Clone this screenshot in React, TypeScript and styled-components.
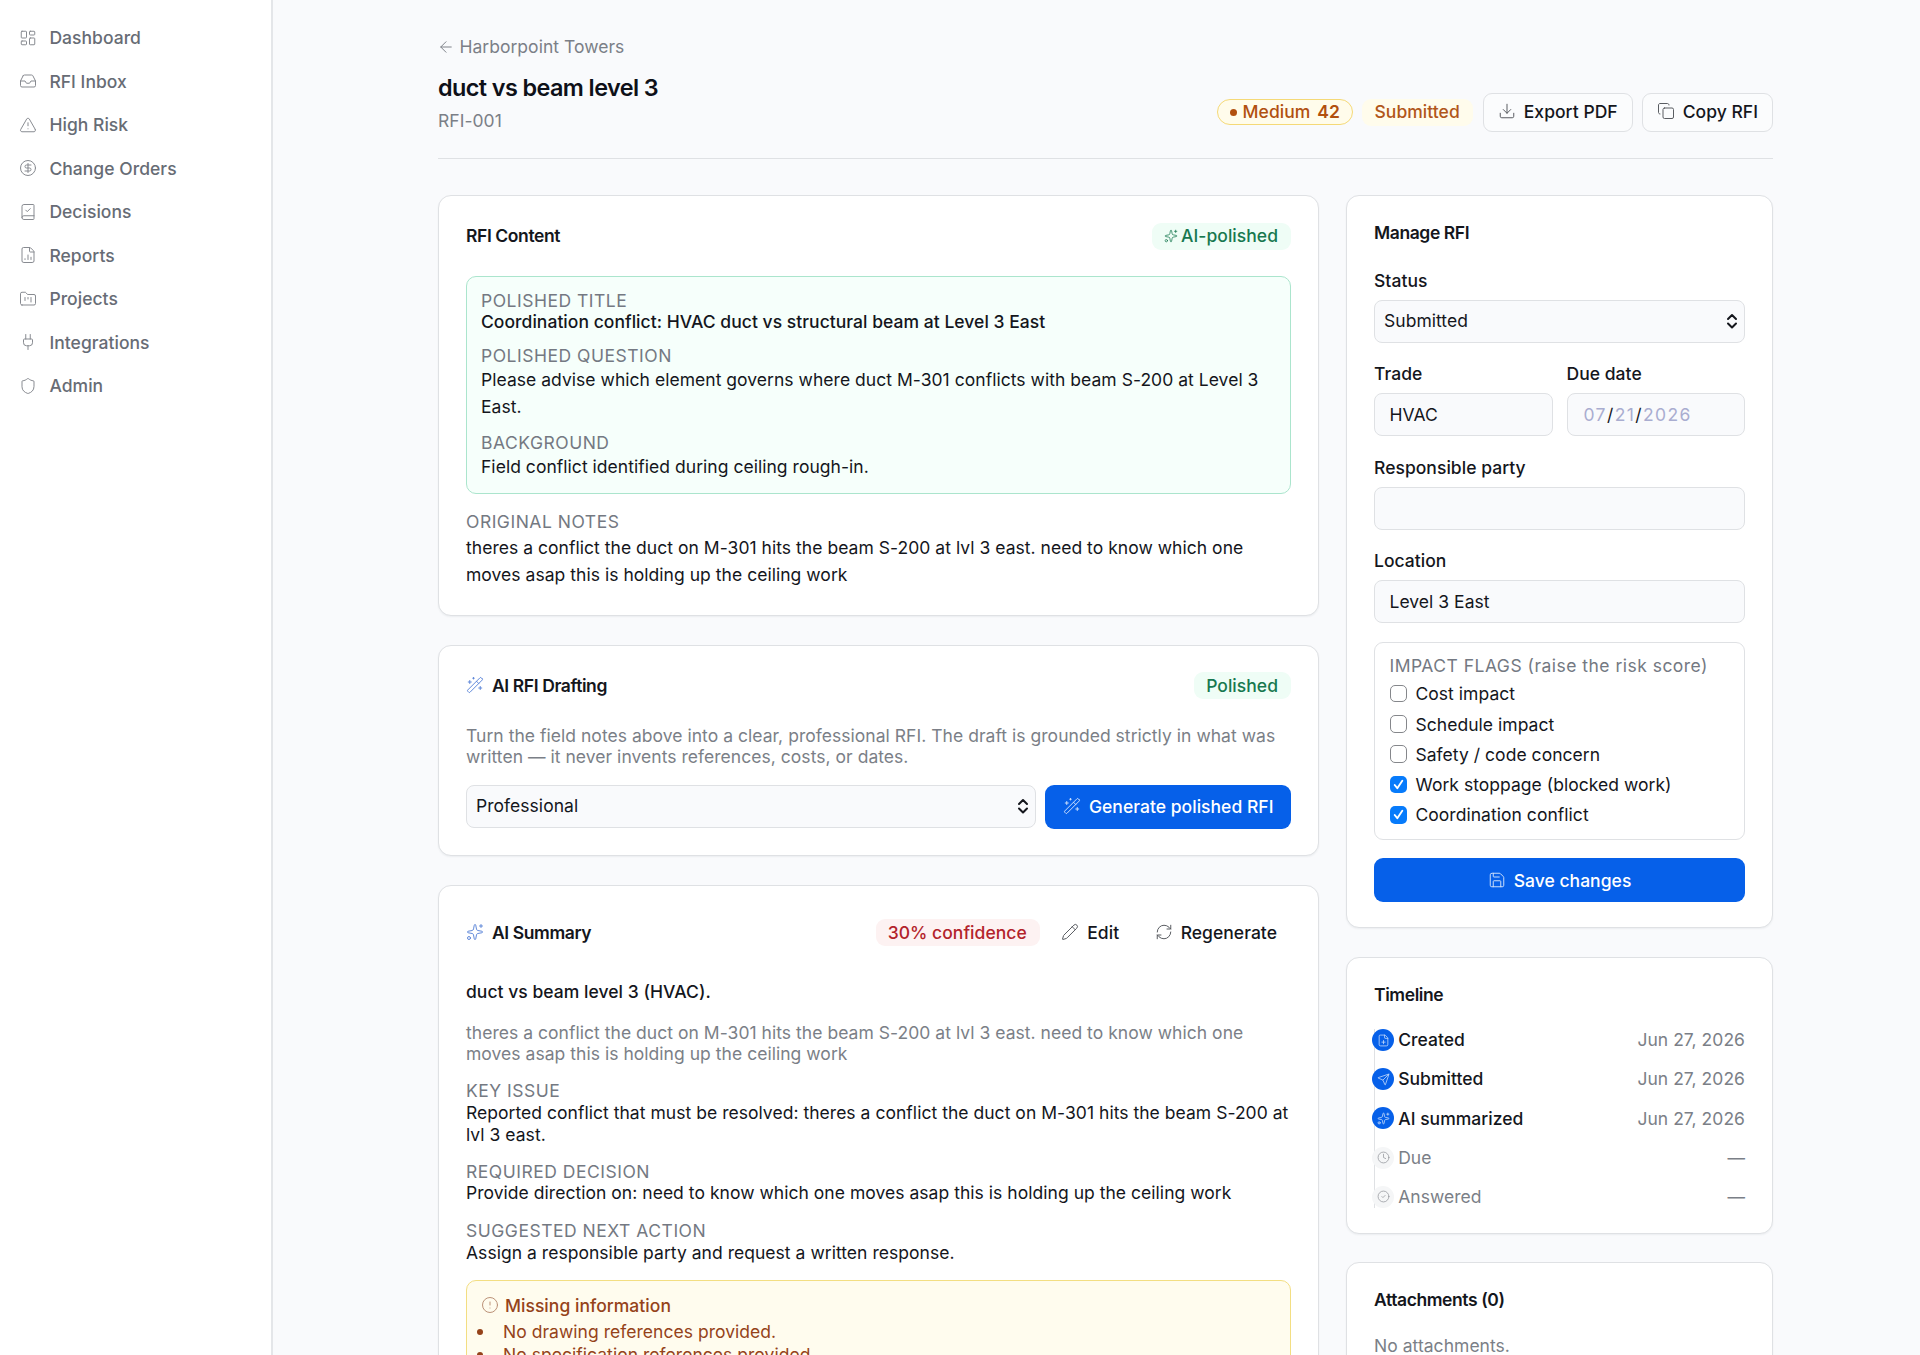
import React from 'react';
import styled, { createGlobalStyle, css } from 'styled-components';
import {
  LayoutDashboard, Inbox, TriangleAlert, CircleDollarSign, BookCheck, FileChartColumn,
  FolderKanban, Plug, Shield, ArrowLeft, Download, Copy, Sparkles, WandSparkles, Pencil,
  RefreshCw, CircleAlert, Save, FilePlus, Send, Clock, CircleCheck, type LucideIcon,
} from 'lucide-react';

const ink = '#14161c';
const muted = '#7b7f87';
const line = '#dfe1e4';
const blue = '#0660e9';

const Global = createGlobalStyle`
  * { box-sizing: border-box; }
  html, body { margin: 0; padding: 0; }
  body {
    background: #f9fafc;
    color: ${ink};
    font-family: Inter, "Liberation Sans", sans-serif;
    font-size: 17.5px;
    line-height: 21.7px;
    letter-spacing: 0.035px;
  }
  h1, h2, p, ul { margin: 0; padding: 0; }
  svg { display: block; flex: none; }
`;

const Page = styled.div`
  display: flex;
  height: 1355px;
  overflow: hidden;
`;

const Sidebar = styled.nav`
  flex: none;
  width: 273px;
  padding: 27px 19px;
  background: #fff;
  border-right: 2px solid #e4e6e9;
`;

const NavItem = styled.a`
  display: flex;
  align-items: center;
  gap: 12.4px;
  height: 22px;
  margin-bottom: 21.5px;
  color: #676c75;
  font-weight: 500;
  svg { color: #85888e; position: relative; top: -0.5px; }
`;

const Main = styled.main`
  flex: 1;
  padding: 35px 147px 0 165px;
`;

const Header = styled.header`
  display: flex;
  justify-content: space-between;
  height: 123.5px;
  border-bottom: 1px solid ${line};
`;

const Back = styled.a`
  display: flex;
  align-items: center;
  gap: 4.4px;
  height: 23px;
  color: ${muted};
  svg { margin-left: -1px; }
`;

const Title = styled.h1`
  margin-top: 14px;
  font-size: 23.4px;
  line-height: 32px;
  font-weight: 600;
  letter-spacing: -0.585px;
  color: #0e1018;
`;

const Ref = styled.p`
  margin-top: 6.3px;
  color: ${muted};
`;

const Actions = styled.div`
  display: flex;
  align-items: center;
  align-self: flex-start;
  gap: 9px;
  margin-top: 57.5px;
`;

const RiskPill = styled.span`
  display: flex;
  align-items: center;
  height: 26px;
  padding: 0 12.5px 0 12px;
  border: 1.5px solid #f5d977;
  border-radius: 13px;
  background: #fffceb;
  color: #b1500f;
  font-weight: 500;
  b { margin-left: 7px; font-weight: 600; }
`;

const Dot = styled.i`
  width: 7px;
  height: 7px;
  margin-right: 6px;
  border-radius: 50%;
  background: #b1500f;
`;

const tones = {
  green: css`background: #effdf6; color: #17784f;`,
  amber: css`background: #fffcec; color: #b1561a; margin-right: 1px;`,
  red: css`background: #fdf2f2; color: #b3232b;`,
};

const Pill = styled.span<{ $tone: keyof typeof tones }>`
  display: inline-flex;
  align-items: center;
  gap: 3px;
  height: 27px;
  padding: 0 13px 0 12px;
  border-radius: 9px;
  font-weight: 500;
  ${p => tones[p.$tone]}
`;

const OutlineButton = styled.button`
  display: flex;
  align-items: center;
  gap: 8px;
  height: 39px;
  padding: 0 14px;
  border: 1px solid ${line};
  border-radius: 9px;
  background: #fbfcfd;
  color: ${ink};
  font: inherit;
  font-weight: 500;
  letter-spacing: inherit;
  svg { color: #55585e; position: relative; top: -1px; }
`;

const GhostButton = styled(OutlineButton)`
  padding: 0 13px;
  border-color: transparent;
  background: none;
`;

const PrimaryButton = styled(OutlineButton)`
  justify-content: center;
  height: 44px;
  padding: 1px 17.5px 0;
  border: 0;
  background: ${blue};
  color: #fff;
  svg { color: #cfe0fb; }
`;

const Columns = styled.div`
  display: grid;
  grid-template-columns: 881px 427px;
  justify-content: space-between;
  align-items: start;
  margin-top: 36.5px;
`;

const Column = styled.div`
  display: flex;
  flex-direction: column;
  gap: 28.5px;
`;

const Card = styled.section<{ $top?: number; $bottom?: number }>`
  padding: ${p => p.$top ?? 25.7}px 27px ${p => p.$bottom ?? 25.4}px;
  border: 1px solid ${line};
  border-radius: 13px;
  background: #fff;
  box-shadow: 0 1px 2px rgba(20, 30, 50, 0.06);
`;

const CardHead = styled.div<{ $h?: number }>`
  display: flex;
  align-items: center;
  justify-content: space-between;
  height: ${p => p.$h ?? 27}px;
`;

const CardTitle = styled.h2`
  display: flex;
  align-items: center;
  gap: 8px;
  font-size: 17.5px;
  line-height: 22px;
  font-weight: 600;
  letter-spacing: -0.4px;
  svg { color: #5d86d8; position: relative; top: -1px; }
`;

const Group = styled.div`
  display: flex;
  align-items: center;
  gap: 7.5px;
`;

const Overline = styled.p`
  line-height: 21px;
  letter-spacing: 0.51px;
  color: #747982;
`;

const Text = styled.p<{ $mt?: number; $lh?: number; $medium?: boolean; $muted?: boolean }>`
  margin-top: ${p => p.$mt ?? 0}px;
  line-height: ${p => p.$lh ?? 21.7}px;
  font-weight: ${p => (p.$medium ? 500 : 400)};
  color: ${p => (p.$muted ? muted : 'inherit')};
`;

const Polished = styled.div`
  display: flex;
  flex-direction: column;
  gap: 11.8px;
  margin: 26.5px 0 17px;
  padding: 12.4px 14px 13.4px;
  border: 1.5px solid #abe5cd;
  border-radius: 10px;
  background: #f6fffb;
`;

const DraftRow = styled.div`
  display: flex;
  gap: 9px;
  margin-top: 16.6px;
`;

const Box = styled.div<{ $select?: boolean }>`
  display: flex;
  flex: 1;
  align-items: center;
  justify-content: space-between;
  height: 43px;
  padding: ${p => (p.$select ? '0 6px 0.6px 9px' : '0.6px 14.5px 0')};
  border: 1px solid ${line};
  border-radius: 8px;
  background: #f9fafc;
`;

const Facts = styled.div`
  display: flex;
  flex-direction: column;
  gap: 15.5px;
  margin-top: 15.4px;
`;

const Warning = styled.div`
  margin-top: 16.4px;
  padding: 14px 14px;
  border: 1.5px solid #f3de82;
  border-radius: 10px;
  background: #fffcee;
  color: #95431a;
`;

const WarningTitle = styled.p`
  display: flex;
  align-items: center;
  gap: 6px;
  font-weight: 500;
  svg { color: #b98f74; }
`;

const Bullets = styled.ul`
  margin-top: 3.8px;
  list-style: none;
`;

const Bullet = styled.li`
  display: flex;
  align-items: center;
  gap: 20px;
  height: 23px;
  margin-left: -4px;
  &::before {
    content: '';
    width: 6px;
    height: 6px;
    border-radius: 50%;
    background: #95431a;
  }
`;

const Form = styled.div`
  display: grid;
  grid-template-columns: 1fr 1fr;
  gap: 20.2px 14px;
  margin-top: 26.2px;
`;

const Field = styled.label<{ $wide?: boolean }>`
  display: flex;
  flex-direction: column;
  grid-column: ${p => (p.$wide ? '1 / -1' : 'auto')};
  gap: 8.2px;
  line-height: 22px;
  font-weight: 500;
  ${Box} { flex: none; font-weight: 400; }
`;

const DateValue = styled.span`
  padding-left: 1.5px;
  letter-spacing: 1.4px;
  color: #a9add0;
  i { font-style: normal; color: ${ink}; }
`;

const Flags = styled.div`
  display: flex;
  flex-direction: column;
  gap: 8.3px;
  margin: 18.4px 0;
  padding: 12.8px 14.5px 12.4px;
  border: 1px solid ${line};
  border-radius: 9px;
  ${Overline} { margin-bottom: -1.6px; letter-spacing: 0.48px; }
`;

const Flag = styled.label`
  display: flex;
  align-items: center;
  gap: 8.5px;
  height: 22px;
`;

const Check = styled.span<{ $on: boolean }>`
  display: grid;
  place-items: center;
  width: 17.5px;
  height: 17.5px;
  margin-top: -1px;
  border: ${p => (p.$on ? '0' : '1px solid #85878b')};
  border-radius: 5px;
  background: ${p => (p.$on ? '#077bfb' : '#fff')};
`;

const Steps = styled.div`
  display: flex;
  flex-direction: column;
  gap: 17.1px;
  margin-top: 23.6px;
  border-left: 1px solid ${line};
`;

const Step = styled.div<{ $done: boolean }>`
  display: flex;
  align-items: center;
  height: 22px;
  margin-left: -3px;
  color: ${p => (p.$done ? ink : muted)};
  font-weight: ${p => (p.$done ? 500 : 400)};
`;

const StepIcon = styled.span<{ $done: boolean }>`
  display: grid;
  place-items: center;
  width: 22px;
  height: 22px;
  margin-right: 4.2px;
  border-radius: 50%;
  background: ${p => (p.$done ? blue : '#f5f6f7')};
  color: ${p => (p.$done ? '#cfe0fb' : '#94979c')};
`;

const StepDate = styled.span`
  margin-left: auto;
  color: ${muted};
  font-weight: 400;
`;

const nav: [string, LucideIcon][] = [
  ['Dashboard', LayoutDashboard],
  ['RFI Inbox', Inbox],
  ['High Risk', TriangleAlert],
  ['Change Orders', CircleDollarSign],
  ['Decisions', BookCheck],
  ['Reports', FileChartColumn],
  ['Projects', FolderKanban],
  ['Integrations', Plug],
  ['Admin', Shield],
];

const flags: [string, boolean][] = [
  ['Cost impact', false],
  ['Schedule impact', false],
  ['Safety / code concern', false],
  ['Work stoppage (blocked work)', true],
  ['Coordination conflict', true],
];

const steps: [string, LucideIcon, string][] = [
  ['Created', FilePlus, 'Jun 27, 2026'],
  ['Submitted', Send, 'Jun 27, 2026'],
  ['AI summarized', Sparkles, 'Jun 27, 2026'],
  ['Due', Clock, ''],
  ['Answered', CircleCheck, ''],
];

const notes =
  'theres a conflict the duct on M-301 hits the beam S-200 at lvl 3 east. need to know which one moves asap this is holding up the ceiling work';

const Chevrons = () => (
  <svg width="12" height="16" viewBox="0 0 12 16" fill="none" stroke={ink} strokeWidth="2" strokeLinecap="round" strokeLinejoin="round">
    <path d="M2 6l4-4 4 4M2 10.5l4 4 4-4" />
  </svg>
);

const Tick = () => (
  <svg width="17" height="17" viewBox="0 0 17 17" fill="none" stroke="#fff" strokeWidth="1.9" strokeLinecap="round" strokeLinejoin="round">
    <path d="M4.7 9l2.6 3.2 5-7.4" />
  </svg>
);

const thin = { size: 18, strokeWidth: 1.3 };

export default function App() {
  return (
    <Page>
      <Global />
      <Sidebar>
        {nav.map(([label, Icon]) => (
          <NavItem key={label}><Icon {...thin} />{label}</NavItem>
        ))}
      </Sidebar>
      <Main>
        <Header>
          <div>
            <Back><ArrowLeft {...thin} />Harborpoint Towers</Back>
            <Title>duct vs beam level 3</Title>
            <Ref>RFI-001</Ref>
          </div>
          <Actions>
            <RiskPill><Dot />Medium <b>42</b></RiskPill>
            <Pill $tone="amber">Submitted</Pill>
            <OutlineButton><Download {...thin} />Export PDF</OutlineButton>
            <OutlineButton><Copy {...thin} />Copy RFI</OutlineButton>
          </Actions>
        </Header>
        <Columns>
          <Column>
            <Card $top={26.8} $bottom={26.6}>
              <CardHead>
                <CardTitle>RFI Content</CardTitle>
                <Pill $tone="green"><Sparkles size={14} strokeWidth={1.3} />AI-polished</Pill>
              </CardHead>
              <Polished>
                <div>
                  <Overline>POLISHED TITLE</Overline>
                  <Text $medium $lh={22} $mt={0.3}>Coordination conflict: HVAC duct vs structural beam at Level 3 East</Text>
                </div>
                <div>
                  <Overline>POLISHED QUESTION</Overline>
                  <Text $lh={27}>Please advise which element governs where duct M-301 conflicts with beam S-200 at Level 3 East.</Text>
                </div>
                <div>
                  <Overline>BACKGROUND</Overline>
                  <Text $lh={27}>Field conflict identified during ceiling rough-in.</Text>
                </div>
              </Polished>
              <Overline>ORIGINAL NOTES</Overline>
              <Text $lh={27.2} $mt={2.2}>{notes}</Text>
            </Card>
            <Card $top={26.6} $bottom={26.6}>
              <CardHead>
                <CardTitle><WandSparkles {...thin} />AI RFI Drafting</CardTitle>
                <Pill $tone="green">Polished</Pill>
              </CardHead>
              <Text $muted $mt={25.4}>
                Turn the field notes above into a clear, professional RFI. The draft is grounded strictly in what was written — it never invents references, costs, or dates.
              </Text>
              <DraftRow>
                <Box $select>Professional<Chevrons /></Box>
                <PrimaryButton><WandSparkles {...thin} />Generate polished RFI</PrimaryButton>
              </DraftRow>
            </Card>
            <Card $top={27.6}>
              <CardHead $h={39}>
                <CardTitle><Sparkles {...thin} />AI Summary</CardTitle>
                <Group>
                  <Pill $tone="red">30% confidence</Pill>
                  <GhostButton><Pencil {...thin} />Edit</GhostButton>
                  <GhostButton><RefreshCw {...thin} />Regenerate</GhostButton>
                </Group>
              </CardHead>
              <Text $medium $mt={28.3}>duct vs beam level 3 (HVAC).</Text>
              <Text $muted $mt={19.3}>{notes}</Text>
              <Facts>
                <div>
                  <Overline>KEY ISSUE</Overline>
                  <Text $mt={0.5}>Reported conflict that must be resolved: theres a conflict the duct on M-301 hits the beam S-200 at lvl 3 east.</Text>
                </div>
                <div>
                  <Overline>REQUIRED DECISION</Overline>
                  <Text $mt={0.5}>Provide direction on: need to know which one moves asap this is holding up the ceiling work</Text>
                </div>
                <div>
                  <Overline>SUGGESTED NEXT ACTION</Overline>
                  <Text $mt={1}>Assign a responsible party and request a written response.</Text>
                </div>
              </Facts>
              <Warning>
                <WarningTitle><CircleAlert {...thin} />Missing information</WarningTitle>
                <Bullets>
                  <Bullet>No drawing references provided.</Bullet>
                  <Bullet>No specification references provided.</Bullet>
                </Bullets>
              </Warning>
            </Card>
          </Column>
          <Column>
            <Card $bottom={25.4}>
              <CardTitle>Manage RFI</CardTitle>
              <Form>
                <Field $wide>Status<Box $select>Submitted<Chevrons /></Box></Field>
                <Field>Trade<Box>HVAC</Box></Field>
                <Field>Due date<Box><DateValue>07<i>/</i>21<i>/</i>2026</DateValue></Box></Field>
                <Field $wide>Responsible party<Box /></Field>
                <Field $wide>Location<Box>Level 3 East</Box></Field>
              </Form>
              <Flags>
                <Overline>IMPACT FLAGS (raise the risk score)</Overline>
                {flags.map(([label, on]) => (
                  <Flag key={label}><Check $on={on}>{on && <Tick />}</Check>{label}</Flag>
                ))}
              </Flags>
              <PrimaryButton as="div"><Save {...thin} />Save changes</PrimaryButton>
            </Card>
            <Card>
              <CardTitle>Timeline</CardTitle>
              <Steps>
                {steps.map(([label, Icon, date]) => (
                  <Step key={label} $done={!!date}>
                    <StepIcon $done={!!date}><Icon size={13} strokeWidth={1.4} /></StepIcon>
                    {label}
                    <StepDate>{date || '—'}</StepDate>
                  </Step>
                ))}
              </Steps>
            </Card>
            <Card>
              <CardTitle>Attachments (0)</CardTitle>
              <Text $muted $mt={23.6}>No attachments.</Text>
            </Card>
          </Column>
        </Columns>
      </Main>
    </Page>
  );
}
